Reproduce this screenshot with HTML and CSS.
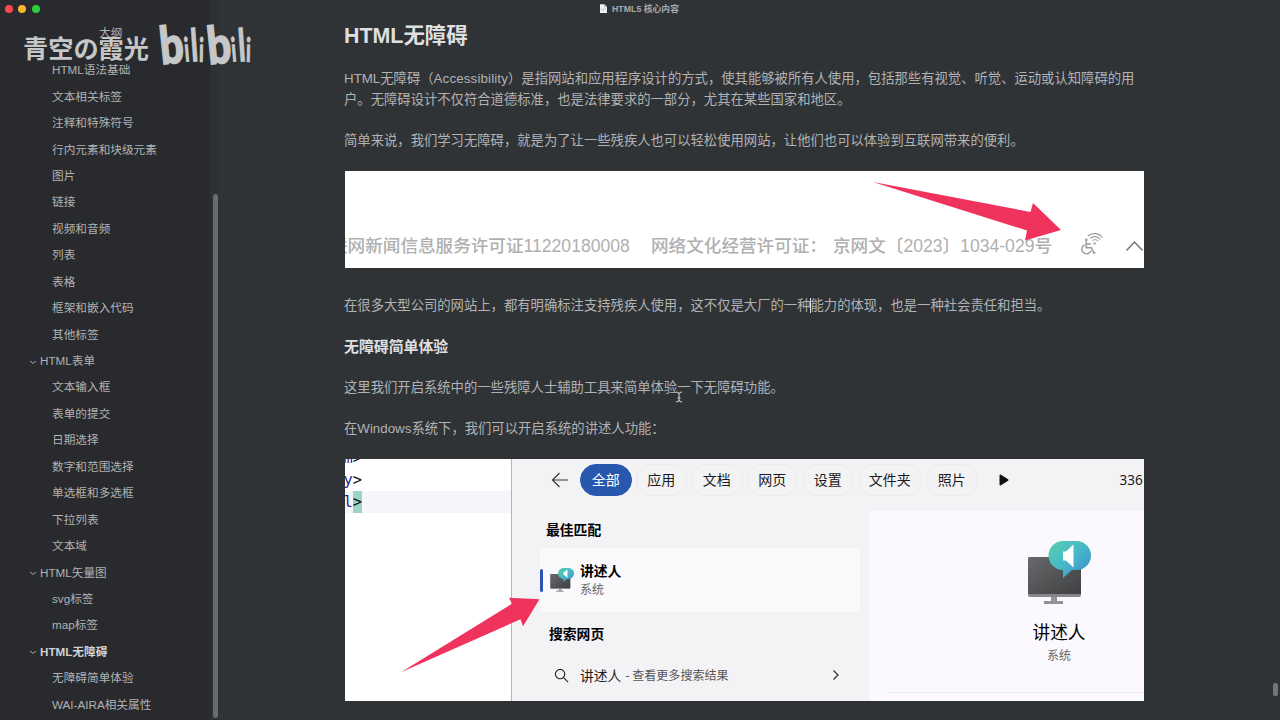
FILE: index.html
```
<!DOCTYPE html>
<html lang="zh-CN">
<head>
  <meta charset="UTF-8">
  <title>HTML5 核心内容</title>
  <link rel="stylesheet" href="styles.css">
</head>
<body>
  <div class="window">
    <aside class="sidebar">
      <div class="lights">
        <span class="light red"></span>
        <span class="light yellow"></span>
        <span class="light green"></span>
      </div>
      <div class="outline-title">大纲</div>
      <ul class="outline">
        <li>HTML语法基础</li>
        <li>文本相关标签</li>
        <li>注释和特殊符号</li>
        <li>行内元素和块级元素</li>
        <li>图片</li>
        <li>链接</li>
        <li>视频和音频</li>
        <li>列表</li>
        <li>表格</li>
        <li>框架和嵌入代码</li>
        <li>其他标签</li>
        <li class="parent"><svg class="chevron" viewBox="0 0 8 8"><path d="M1 3l3 2.4L7 3"/></svg>HTML表单</li>
        <li>文本输入框</li>
        <li>表单的提交</li>
        <li>日期选择</li>
        <li>数字和范围选择</li>
        <li>单选框和多选框</li>
        <li>下拉列表</li>
        <li>文本域</li>
        <li class="parent"><svg class="chevron" viewBox="0 0 8 8"><path d="M1 3l3 2.4L7 3"/></svg>HTML矢量图</li>
        <li>svg标签</li>
        <li>map标签</li>
        <li class="parent active"><svg class="chevron" viewBox="0 0 8 8"><path d="M1 3l3 2.4L7 3"/></svg>HTML无障碍</li>
        <li>无障碍简单体验</li>
        <li>WAI-AIRA相关属性</li>
      </ul>
      <div class="side-thumb"></div>
    </aside>

    <main class="content">
      <div class="titlebar">
        <svg class="doc-icon" viewBox="0 0 8 10"><path d="M0 0h5l3 3v7H0z" fill="#f1f1f1"/><path d="M5 0v3h3M2 5l-1 1 1 1M6 5l1 1-1 1M4.5 5l-1 2.5" fill="none" stroke="#8b8c8e" stroke-width=".6"/></svg>
        <span>HTML5 核心内容</span>
      </div>

      <article class="article">
        <h2>HTML无障碍</h2>
        <p>HTML无障碍（<span class="latin">Accessibility</span>）是指网站和应用程序设计的方式，使其能够被所有人使用，包括那些有视觉、听觉、运动或认知障碍的用户。无障碍设计不仅符合道德标准，也是法律要求的一部分，尤其在某些国家和地区。</p>
        <p>简单来说，我们学习无障碍，就是为了让一些残疾人也可以轻松使用网站，让他们也可以体验到互联网带来的便利。</p>

        <div class="shot shot-footer">
          <div class="licence">
            <span class="licence-news">联网新闻信息服务许可证11220180008</span>
            <span class="licence-culture">网络文化经营许可证：</span>
            <span class="licence-code">京网文〔2023〕1034-029号</span>
            <svg class="wheelchair" viewBox="0 0 24 24" fill="none" stroke="#9b9b9b">
              <circle cx="7" cy="8.6" r="1.3" fill="#9b9b9b" stroke="none"/>
              <path d="M7 10v6h5l2.2 5.2 1.5-.5M7 12.5h4.5" stroke-width="1.5"/>
              <path d="M5.3 13.2a4.6 4.6 0 1 0 6.3 5.8" stroke-width="1.4"/>
              <path d="M8.5 4.8a9.5 9.5 0 0 1 14 1.7M10.7 7a6.7 6.7 0 0 1 9.7 1.1M12.8 9.2a4 4 0 0 1 5.5.6" stroke-width="1.1"/>
              <circle cx="15" cy="12" r="1.1" fill="#9b9b9b" stroke="none"/>
            </svg>
            <svg class="up" viewBox="0 0 18 12"><path d="M1 10.5l8-8.5 8 8.5" fill="none" stroke="#737373" stroke-width="1.5"/></svg>
          </div>
          <svg class="arrow" viewBox="0 0 799 97"><path d="M528 11L685.500 41 688 32 716 59 680 69.500 682 59.500z" fill="#f0335d"/></svg>
        </div>

        <p>在很多大型公司的网站上，都有明确标注支持残疾人使用，这不仅是大厂的一种<span class="caret"></span>能力的体现，也是一种社会责任和担当。</p>
        <h3>无障碍简单体验</h3>
        <p>这里我们开启系统中的一些残障人士辅助工具来简单体验一下无障碍功能。</p>
        <p>在Windows系统下，我们可以开启系统的讲述人功能：</p>

        <div class="shot shot-search">
          <div class="code">
            <div class="code-line"><span>m</span>&gt;</div>
            <div class="code-line"><span>y</span>&gt;</div>
            <div class="code-line current"><span>l</span><b>&gt;</b></div>
          </div>
          <div class="search">
            <div class="tabs">
              <svg class="back" viewBox="0 0 18 16"><path d="M17 8H1.500M8.500 1L1.500 8l7 7" fill="none" stroke="#333" stroke-width="1.1"/></svg>
              <span class="tab selected">全部</span>
              <span class="tab">应用</span>
              <span class="tab">文档</span>
              <span class="tab">网页</span>
              <span class="tab">设置</span>
              <span class="tab wide">文件夹</span>
              <span class="tab">照片</span>
              <svg class="play" viewBox="0 0 10 12"><path d="M1.500 1.500v9L8.500 6z" fill="#111" stroke="#111" stroke-width="2" stroke-linejoin="round"/></svg>
              <span class="points">336</span>
            </div>
            <div class="panes">
              <div class="results">
                <div class="label">最佳匹配</div>
                <div class="best">
                  <span class="marker"></span>
                  <svg class="narrator-small" viewBox="0 0 64 64"><use href="#narrator"/></svg>
                  <div>
                    <div class="best-name">讲述人</div>
                    <div class="best-kind">系统</div>
                  </div>
                </div>
                <div class="label web">搜索网页</div>
                <div class="web-row">
                  <svg class="lens" viewBox="0 0 16 16" fill="none" stroke="#222" stroke-width="1.200"><circle cx="6.500" cy="6.500" r="5"/><path d="M10.200 10.200L15 15"/></svg>
                  <span class="query">讲述人</span>
                  <span class="more">- 查看更多搜索结果</span>
                  <svg class="next" viewBox="0 0 8 12"><path d="M1.500 1.500L6 6l-4.500 4.500" fill="none" stroke="#333" stroke-width="1.300"/></svg>
                </div>
              </div>
              <div class="detail">
                <svg class="narrator-big" viewBox="0 0 64 64">
                  <defs>
                    <linearGradient id="bubble" x1="0" y1="0" x2="1" y2="1">
                      <stop offset="0" stop-color="#55d0ad"/>
                      <stop offset=".5" stop-color="#48b8c8"/>
                      <stop offset="1" stop-color="#3b86d2"/>
                    </linearGradient>
                    <linearGradient id="screen" x1="0" y1="0" x2="1" y2="1">
                      <stop offset="0" stop-color="#68696b"/>
                      <stop offset="1" stop-color="#3f4042"/>
                    </linearGradient>
                    <g id="narrator">
                      <path d="M24 54h6v6h6v3H17v-3h7z" fill="#929496"/>
                      <rect x="1" y="16" width="53" height="40" rx="2" fill="#85878a"/>
                      <path d="M3 16h49q2 0 2 2v35H1V18q0-2 2-2z" fill="url(#screen)"/>
                      <path d="M36 0h13.500a14.500 14.500 0 0 1 0 29H45l-9 8v-8A14.500 14.500 0 0 1 36 0z" fill="url(#bubble)"/>
                      <path d="M36 10.500h3L46.500 3.500v23l-7.500-7h-3z" fill="#fff"/>
                    </g>
                  </defs>
                  <use href="#narrator"/>
                </svg>
                <div class="detail-name">讲述人</div>
                <div class="detail-kind">系统</div>
                <div class="divider"></div>
              </div>
            </div>
          </div>
          <svg class="arrow" viewBox="0 0 799 241"><path d="M56 213L167 144.500 164 138.500 194.500 140 178 167 175.500 160z" fill="#f0335d"/></svg>
        </div>
      </article>
      <div class="main-thumb"></div>
    </main>

    <!-- channel watermark lies over the whole window -->
    <div class="watermark">
      <span class="author">青空の霞光</span>
      <svg class="logo" width="98" height="48" viewBox="0 0 98 48">
        <text class="logo-b" transform="translate(3.500 42.500) rotate(-6) scale(.8 1)">b</text>
        <text class="logo-i" transform="translate(27 40) rotate(-5) scale(.62 1)">i</text>
        <text class="logo-l" transform="translate(33.500 40) rotate(-4) scale(.66 1)">l</text>
        <text class="logo-i" transform="translate(40.500 40) rotate(1) scale(.62 1)">i</text>
        <text class="logo-b" transform="translate(51 42.500) rotate(-6) scale(.8 1)">b</text>
        <text class="logo-i" transform="translate(74 40) rotate(-5) scale(.62 1)">i</text>
        <text class="logo-l" transform="translate(81 40) rotate(-4) scale(.66 1)">l</text>
        <text class="logo-i" transform="translate(87.500 40) rotate(1) scale(.62 1)">i</text>
      </svg>
    </div>
    <svg class="ibeam" viewBox="0 0 8 12"><path d="M1 1q3 0 3 2v6q0 2-3 2M7 1q-3 0-3 2M7 11q-3 0-3-2M2.500 7h3" fill="none" stroke="#d5d5d5"/></svg>
  </div>
</body>
</html>
```
FILE: styles.css
```
* {
  box-sizing: border-box;
  margin: 0;
  padding: 0;
}

body {
  background: #303336;
  font-family: "Liberation Sans", "Noto Sans CJK SC", sans-serif;
  color: #b0b2b4;
}

.window {
  position: relative;
  display: flex;
  width: 1280px;
  height: 720px;
  overflow: hidden;
}

/* sidebar */
.sidebar {
  position: relative;
  width: 219px;
  background: linear-gradient(to right, #292a2d 209px, #2e3033 211px);
  font-size: 11.67px;
}

.lights {
  display: flex;
  gap: 5.300px;
  padding: 4.500px 0 0 5px;
}

.light {
  width: 8px;
  height: 8px;
  border-radius: 50%;
}

.red {
  background: #fb4a50;
}

.yellow {
  background: #fbb42e;
}

.green {
  background: #30cc3e;
}

.outline-title {
  height: 43px;
  padding-top: 11px;
  padding-left: 99px;
  line-height: 17px;
}

.outline {
  list-style: none;
}

.outline li {
  display: flex;
  align-items: center;
  height: 26.440px;
  padding-left: 52px;
  white-space: nowrap;
}

.outline .parent {
  padding-left: 29px;
}

.outline .active {
  font-weight: bold;
  color: #d0d1d2;
}

.chevron {
  width: 8px;
  height: 8px;
  margin: 4px 3px 0 0;
  fill: none;
  stroke: #a5a6a8;
}

.side-thumb {
  position: absolute;
  top: 194px;
  right: 1px;
  width: 5px;
  height: 524px;
  border-radius: 3px;
  background: #696b6d;
}

/* document */
.content {
  position: relative;
  flex: 1;
  background: #303336;
}

.titlebar {
  display: flex;
  align-items: center;
  gap: 5px;
  height: 16px;
  padding-left: 381px;
  font-size: 8.800px;
  font-weight: bold;
  color: #a7a9ab;
}

.doc-icon {
  width: 7px;
  height: 9px;
}

.article {
  width: 925px;
  padding: 4px 0 0 125px;
  font-size: 13.330px;
  line-height: 21.330px;
}

.article p {
  margin-bottom: 20px;
}

.article h2 {
  height: 47.500px;
  font-size: 21.400px;
  font-weight: 600;
  line-height: 32px;
  color: #dedfe0;
}

.article h3 {
  margin: 21px 0 18px;
  font-size: 14.900px;
  font-weight: 600;
  color: #dedfe0;
}

.latin {
  letter-spacing: .14px;
}

.caret {
  display: inline-block;
  width: 1px;
  height: 15px;
  margin-right: -1px;
  vertical-align: -3px;
  background: #dedfe0;
}

.shot {
  position: relative;
  width: 799px;
  margin-left: 1px;
  overflow: hidden;
  background: #fff;
}

.arrow {
  position: absolute;
  top: 0;
  left: 0;
  width: 100%;
  height: 100%;
}

.shot-footer {
  height: 97px;
  margin-bottom: 26.500px;
}

.licence {
  display: flex;
  align-items: center;
  height: 30px;
  margin: 60px 0 0 -15px;
  font-size: 17.600px;
  font-weight: 500;
  white-space: nowrap;
  color: #b0b0b0;
}

.licence span,
.licence svg {
  flex: none;
}

.licence-news {
  width: 321px;
}

.licence-culture {
  width: 182px;
}

.licence-code {
  width: 246px;
}

.wheelchair {
  width: 25px;
  height: 25px;
  margin: -5px 21px 0 0;
}

.up {
  width: 19px;
  height: 12px;
}

/* start menu search */
.shot-search {
  display: flex;
  height: 241.500px;
  font-family: "Noto Sans", "Noto Sans CJK SC", sans-serif;
  color: #1b1b1b;
}

.code {
  width: 167px;
  border-right: 1px solid #b5b5b8;
  font-family: "DejaVu Sans Mono", monospace;
  font-size: 15.300px;
}

.code-line {
  height: 22px;
  padding-left: -1px;
  line-height: 22px;
  text-indent: -1.500px;
  color: #111;
}

.code-line:first-child {
  margin-top: -12px;
}

.code-line span {
  color: #26269c;
}

.code-line b {
  display: inline-block;
  height: 22px;
  font-weight: normal;
  text-indent: 0;
  background: #9bd5c8;
}

.current {
  background: #f4f6fa;
}

.search {
  flex: 1;
  background: #f3f2f5;
}

.tabs {
  display: flex;
  align-items: center;
  gap: 4px;
  height: 42px;
  padding-left: 39px;
}

.back {
  width: 18px;
  height: 16px;
  margin-right: 7px;
}

.tab {
  width: 51.500px;
  height: 32px;
  border: 1px solid #ebeaed;
  border-radius: 16px;
  font-size: 14px;
  line-height: 29px;
  text-align: center;
}

.tab.wide {
  width: 64.500px;
}

.selected {
  border-color: #2857ae;
  background: #2857ae;
  color: #fff;
}

.play {
  width: 10px;
  height: 12px;
  margin-left: 17px;
}

.points {
  margin-left: 107px;
  font-size: 13.500px;
}

.panes {
  display: flex;
  justify-content: space-between;
  height: 199.500px;
}

.results {
  width: 348px;
  padding-left: 28px;
}

.label {
  height: 47px;
  padding: 18px 0 0 6px;
  font-size: 13.800px;
  font-weight: bold;
  color: #000;
}

.best {
  display: flex;
  align-items: center;
  height: 64px;
  border-radius: 4px;
  background: #faf9fc;
}

.marker {
  width: 3px;
  height: 23px;
  border-radius: 2px;
  background: #2b55b5;
}

.narrator-small {
  width: 24px;
  height: 24px;
  margin: 0 6px 0 7px;
}

.best-name {
  font-size: 13.800px;
  font-weight: bold;
  line-height: 19px;
  color: #000;
}

.best-kind {
  font-size: 12px;
  line-height: 20px;
  color: #666;
}

.label.web {
  height: 50px;
  padding: 11px 0 0 9px;
}

.web-row {
  display: flex;
  align-items: center;
  height: 26px;
  padding-left: 14px;
}

.lens {
  width: 15px;
  height: 15px;
  margin-right: 11px;
}

.query {
  font-size: 13.800px;
}

.more {
  width: 207px;
  margin-left: 4px;
  font-size: 12px;
  color: #555;
}

.next {
  width: 8px;
  height: 12px;
}

.detail {
  display: flex;
  flex-direction: column;
  align-items: center;
  width: 275px;
  margin-top: 10px;
  padding-top: 30px;
  background: #fbf9fd;
}

.narrator-big,
.detail-name,
.detail-kind {
  margin-left: 105px;
}

.narrator-big {
  width: 64px;
  height: 64px;
}

.detail-name {
  margin-top: 15px;
  font-size: 17.700px;
  line-height: 24px;
  color: #000;
}

.detail-kind {
  margin-top: 1px;
  font-size: 12px;
  color: #666;
}

.divider {
  align-self: flex-end;
  width: 256px;
  height: 1px;
  margin-top: 25px;
  background: #ebe9ee;
}

.main-thumb {
  position: absolute;
  top: 683px;
  right: 2px;
  width: 5px;
  height: 13px;
  border-radius: 2px;
  background: #737577;
}

/* overlays */
.watermark {
  position: absolute;
  top: 22px;
  left: 23px;
  display: flex;
  align-items: center;
  color: #c6c7c8;
}

.author {
  width: 135px;
  padding-top: 2px;
  font-family: "Noto Sans CJK SC", sans-serif;
  font-size: 25.200px;
  font-weight: bold;
  line-height: 44px;
}

.logo {
  font-family: Lato, sans-serif;
  font-weight: 900;
  fill: #c6c7c8;
  stroke: #c6c7c8;
}

.logo-b {
  font-size: 52px;
  stroke-width: 1.500px;
}

.logo-i {
  font-size: 34px;
  stroke-width: .3px;
}

.logo-l {
  font-size: 46px;
  stroke-width: .3px;
}

.ibeam {
  position: absolute;
  top: 391px;
  left: 675px;
  width: 8px;
  height: 12px;
}
```
